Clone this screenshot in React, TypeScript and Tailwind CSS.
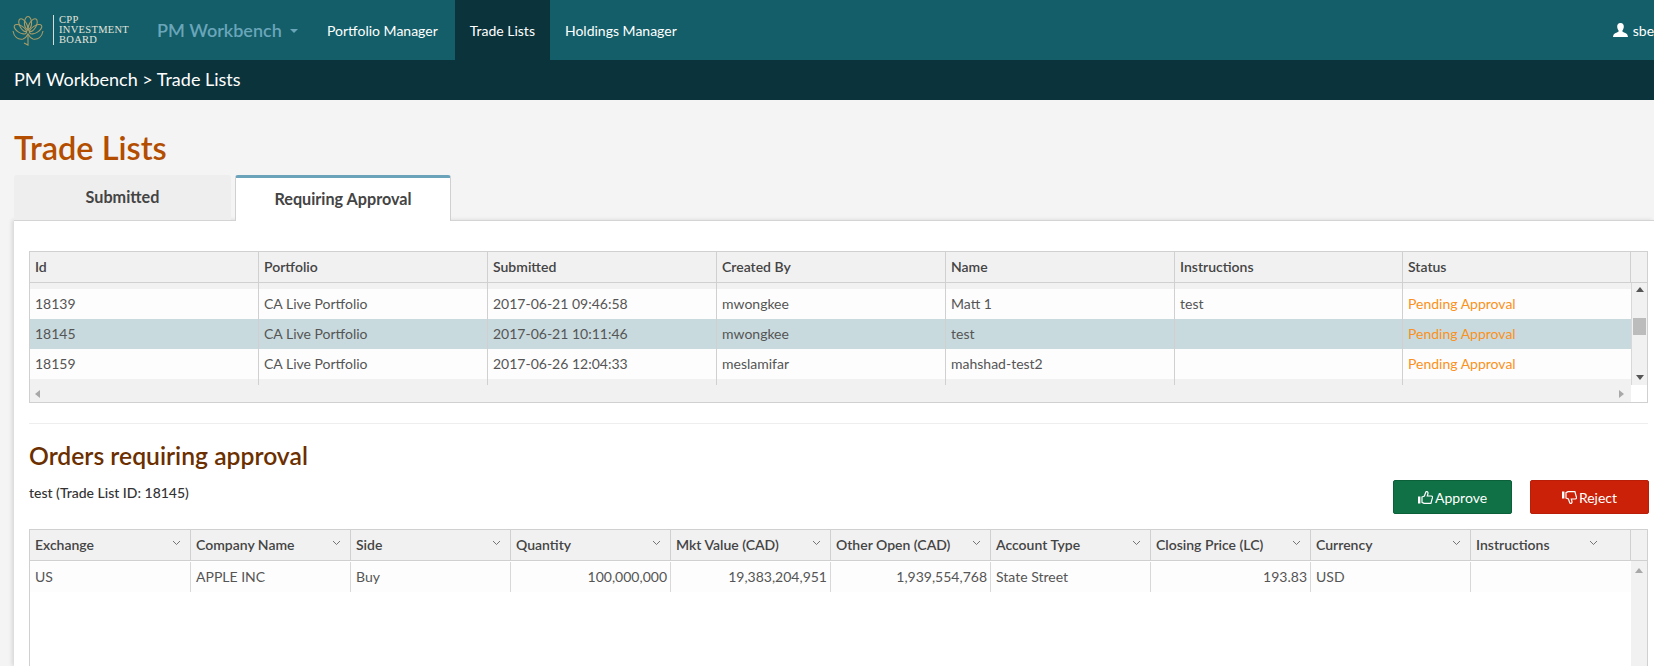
const tradeCols = ["Id", "Portfolio", "Submitted", "Created By", "Name", "Instructions", "Status"]

const tradeRows = [
  { id: "18139", portfolio: "CA Live Portfolio", submitted: "2017-06-21 09:46:58", by: "mwongkee", name: "Matt 1", instructions: "test", status: "Pending Approval" },
  { id: "18145", portfolio: "CA Live Portfolio", submitted: "2017-06-21 10:11:46", by: "mwongkee", name: "test", instructions: "", status: "Pending Approval", selected: true },
  { id: "18159", portfolio: "CA Live Portfolio", submitted: "2017-06-26 12:04:33", by: "meslamifar", name: "mahshad-test2", instructions: "", status: "Pending Approval" },
]

const orderCols = ["Exchange", "Company Name", "Side", "Quantity", "Mkt Value (CAD)", "Other Open (CAD)", "Account Type", "Closing Price (LC)", "Currency", "Instructions"]

const orderRow = [
  { text: "US" },
  { text: "APPLE INC" },
  { text: "Buy" },
  { text: "100,000,000", right: true },
  { text: "19,383,204,951", right: true },
  { text: "1,939,554,768", right: true },
  { text: "State Street" },
  { text: "193.83", right: true },
  { text: "USD" },
  { text: "" },
]

const tradeGrid = "grid grid-cols-[229px_229px_229px_229px_229px_228px_228px]"
const orderGrid = "grid grid-cols-[161px_160px_160px_160px_160px_160px_160px_160px_160px_160px]"

function Logo() {
  return (
    <div className="flex items-center w-[157px] pl-3 shrink-0">
      <svg width="32" height="31" viewBox="0 0 32 31" fill="none" stroke="#a89c68" strokeWidth="1.1">
        <ellipse cx="16" cy="8" rx="3.6" ry="6.5" />
        <ellipse cx="16" cy="9" rx="3.6" ry="7" transform="rotate(-28 16 19)" />
        <ellipse cx="16" cy="9" rx="3.6" ry="7" transform="rotate(28 16 19)" />
        <ellipse cx="16" cy="10" rx="3.4" ry="7" transform="rotate(-58 16 19)" />
        <ellipse cx="16" cy="10" rx="3.4" ry="7" transform="rotate(58 16 19)" />
        <path d="M1 16 C2 22 6 25 11 24 C14 23 15 21 16 19 C17 21 18 23 21 24 C26 25 30 22 31 16" />
        <path d="M16 19 L16 30 L12 28" />
      </svg>
      <div className="w-px h-[30px] bg-[#d5dcdc] ml-[9px] mr-[5px]" />
      <div className="font-['Liberation_Serif',serif] text-[10.5px] leading-[10px] tracking-[0.3px] text-[#e3e5df]">
        <div>CPP</div>
        <div>INVESTMENT</div>
        <div>BOARD</div>
      </div>
    </div>
  )
}

function UserIcon() {
  return (
    <svg width="15" height="14" viewBox="0 0 15 14" fill="currentColor">
      <path d="M7.5 0 C10 0 11 2 10.8 4 C10.7 5.6 10 6.8 9.4 7.6 C9.2 8.6 9.8 9 11 9.5 C13 10.2 14.6 10.8 15 14 L0 14 C0.4 10.8 2 10.2 4 9.5 C5.2 9 5.8 8.6 5.6 7.6 C5 6.8 4.3 5.6 4.2 4 C4 2 5 0 7.5 0 Z" />
    </svg>
  )
}

function ThumbIcon({ down }: { down?: boolean }) {
  return (
    <svg width="15" height="13" viewBox="0 0 15 13" className={down ? "-scale-y-100" : ""}>
      <rect x="0" y="5.5" width="2.4" height="7" fill="currentColor" />
      <path
        d="M4 6 L6.4 5 L7.8 1 C8.8 0.1 10.4 0.9 9.9 2.8 L9.3 5 L13.2 5 C14.7 5 14.8 6.6 14.2 7.6 L12.9 12.4 L6 12.4 L4 11.4 Z"
        fill="none"
        stroke="currentColor"
        strokeWidth="1.2"
      />
    </svg>
  )
}

function Arrow({ dir, color = "#555" }: { dir: "up" | "down" | "left" | "right"; color?: string }) {
  const points = {
    up: "0,5 4,0 8,5",
    down: "0,0 8,0 4,5",
    left: "5,0 5,8 0,4",
    right: "0,0 0,8 5,4",
  }[dir]
  const horizontal = dir === "left" || dir === "right"
  return (
    <svg width={horizontal ? 5 : 8} height={horizontal ? 8 : 5} fill={color}>
      <polygon points={points} />
    </svg>
  )
}

function TradeTable() {
  return (
    <div className="border border-[#d0d0d0] w-[1619px] h-[152px] bg-[#f1f1f1] text-[14px]">
      <div className="flex h-[31px] border-b border-[#d0d0d0]">
        <div className={tradeGrid + " w-[1601px]"}>
          {tradeCols.map((c) => (
            <div key={c} className="border-r border-[#d0d0d0] pl-[5px] font-semibold text-[#444] leading-[30px]">
              {c}
            </div>
          ))}
        </div>
      </div>
      <div className="flex">
        <div className="w-[1601px]">
          <div className={tradeGrid + " h-[6px]"}>
            {tradeCols.map((c) => (
              <div key={c} className="border-r border-[#d0d0d0] last:border-r-0" />
            ))}
          </div>
          {tradeRows.map((r) => (
            <div key={r.id} className={tradeGrid + " h-[30px] leading-[30px] text-[#555] " + (r.selected ? "bg-[#c8dade]" : "bg-[#fdfdfd]")}>
              <div className="border-r border-[#d0d0d0] pl-[5px]">{r.id}</div>
              <div className="border-r border-[#d0d0d0] pl-[5px]">{r.portfolio}</div>
              <div className="border-r border-[#d0d0d0] pl-[5px]">{r.submitted}</div>
              <div className="border-r border-[#d0d0d0] pl-[5px]">{r.by}</div>
              <div className="border-r border-[#d0d0d0] pl-[5px]">{r.name}</div>
              <div className="border-r border-[#d0d0d0] pl-[5px]">{r.instructions}</div>
              <div className="pl-[5px] text-[#fb9120]">{r.status}</div>
            </div>
          ))}
          <div className={tradeGrid + " h-[6px]"}>
            {tradeCols.map((c) => (
              <div key={c} className="border-r border-[#d0d0d0] last:border-r-0" />
            ))}
          </div>
        </div>
        <div className="w-[16px] h-[102px] border-l border-[#d8d8d8] flex flex-col items-center">
          <div className="mt-[4px] h-[5px] flex"><Arrow dir="up" /></div>
          <div className="mt-[26px] w-[13px] h-[17px] bg-[#bcbcbc]" />
          <div className="mt-auto mb-[5px] h-[5px] flex"><Arrow dir="down" /></div>
        </div>
      </div>
      <div className="flex h-[17px]">
        <div className="w-[1601px] flex items-center justify-between px-[5px] pr-[7px]">
          <Arrow dir="left" color="#a8a8a8" />
          <Arrow dir="right" color="#a8a8a8" />
        </div>
        <div className="w-[16px] bg-white" />
      </div>
    </div>
  )
}

function OrdersTable() {
  return (
    <div className="border border-[#d0d0d0] w-[1619px] h-[200px] bg-white text-[14px]">
      <div className="flex h-[31px] border-b border-[#d0d0d0] bg-[#f1f1f1]">
        <div className={orderGrid + " w-[1601px]"}>
          {orderCols.map((c, i) => (
            <div key={c} className="relative border-r border-[#d0d0d0] pl-[5px] font-semibold text-[#444] leading-[30px]">
              {c}
              <svg
                width="9"
                height="6"
                viewBox="0 0 9 6"
                fill="none"
                stroke="#666"
                strokeWidth="0.9"
                className={"absolute top-[10px] " + (i === orderCols.length - 1 ? "right-[32px]" : "right-[9px]")}
              >
                <path d="M1 1 L4.5 4.5 L8 1" />
              </svg>
            </div>
          ))}
        </div>
      </div>
      <div className="flex h-[170px]">
        <div className="w-[1601px]">
          <div className={orderGrid + " mt-[1px] h-[30px] leading-[30px] text-[#555] bg-[#fdfdfd]"}>
            {orderRow.map((cell, i) => (
              <div key={i} className={"border-r border-[#d8d8d8] last:border-r-0 " + (cell.right ? "text-right pr-[3px]" : "pl-[5px]")}>
                {cell.text}
              </div>
            ))}
          </div>
        </div>
        <div className="w-[16px] bg-[#f1f1f1] flex flex-col items-center pt-[7px]">
          <div className="h-[5px] flex"><Arrow dir="up" color="#a8a8a8" /></div>
        </div>
      </div>
    </div>
  )
}

export default function App() {
  return (
    <div className="w-[1654px] h-[666px] overflow-hidden bg-[#f4f4f4] font-['Lato',sans-serif]">
      <nav className="flex h-[60px] bg-[#135e68] text-[14px] text-white whitespace-nowrap">
        <Logo />
        <div className="flex items-center w-[155px] shrink-0 text-[18px] font-semibold text-[#6aa5ba]">
          PM Workbench
          <span className="ml-[8px] mt-[2px] border-x-[4px] border-x-transparent border-t-[4px] border-t-[#6aa5ba]" />
        </div>
        <a className="flex items-center pl-[15px] pr-[17px]">Portfolio Manager</a>
        <a className="flex items-center px-[15px] bg-[#0b333c]">Trade Lists</a>
        <a className="flex items-center px-[15px]">Holdings Manager</a>
        <div className="flex items-center gap-[5px] ml-[921px] shrink-0">
          <UserIcon />
          <span>sbecker</span>
        </div>
      </nav>
      <div className="h-[40px] bg-[#0b333c] pl-[14px] text-[18px] leading-[39px] text-white">PM Workbench &gt; Trade Lists</div>

      <main className="pl-[14px]">
        <h1 className="pt-[28px] h-[75px] text-[32.5px] leading-[40px] font-semibold text-[#b34d00]">Trade Lists</h1>
        <div className="flex gap-[4px] h-[45px] text-[16.2px] font-bold text-[#444]">
          <div className="w-[217px] rounded-t-[3px] bg-[#eeeeee] text-center leading-[43px]">Submitted</div>
          <div className="relative z-10 w-[216px] h-[46px] rounded-t-[3px] border-x border-t-[3px] border-x-[#d0d0d0] border-t-[#6ba3bb] bg-white text-center leading-[42px]">
            Requiring Approval
          </div>
        </div>
        <section className="h-[446px] border-t border-[#d4d4d4] bg-white pl-[15px] pt-[30px] shadow-[-2px_0_4px_rgba(0,0,0,0.12)]">
          <TradeTable />
          <hr className="mt-[20px] w-[1619px] border-[#eeeeee]" />
          <div className="flex w-[1620px]">
            <div className="flex-1">
              <h2 className="mt-[17px] text-[24.7px] leading-[30px] font-semibold text-[#6b2f00]">Orders requiring approval</h2>
              <p className="mt-[12px] text-[14px] leading-[20px] font-medium text-[#333]">test (Trade List ID: 18145)</p>
            </div>
            <div className="flex gap-[18px] mt-[56px] text-[14px] text-white">
              <button className="flex items-center justify-center gap-[2px] w-[119px] h-[34px] rounded-[2px] border border-[#0b5f39] bg-[#0f7145]">
                <ThumbIcon />
                Approve
              </button>
              <button className="flex items-center justify-center gap-[2px] w-[119px] h-[34px] rounded-[2px] border border-[#b81e08] bg-[#cb2109]">
                <ThumbIcon down />
                Reject
              </button>
            </div>
          </div>
          <div className="mt-[15px]">
            <OrdersTable />
          </div>
        </section>
      </main>
    </div>
  )
}
